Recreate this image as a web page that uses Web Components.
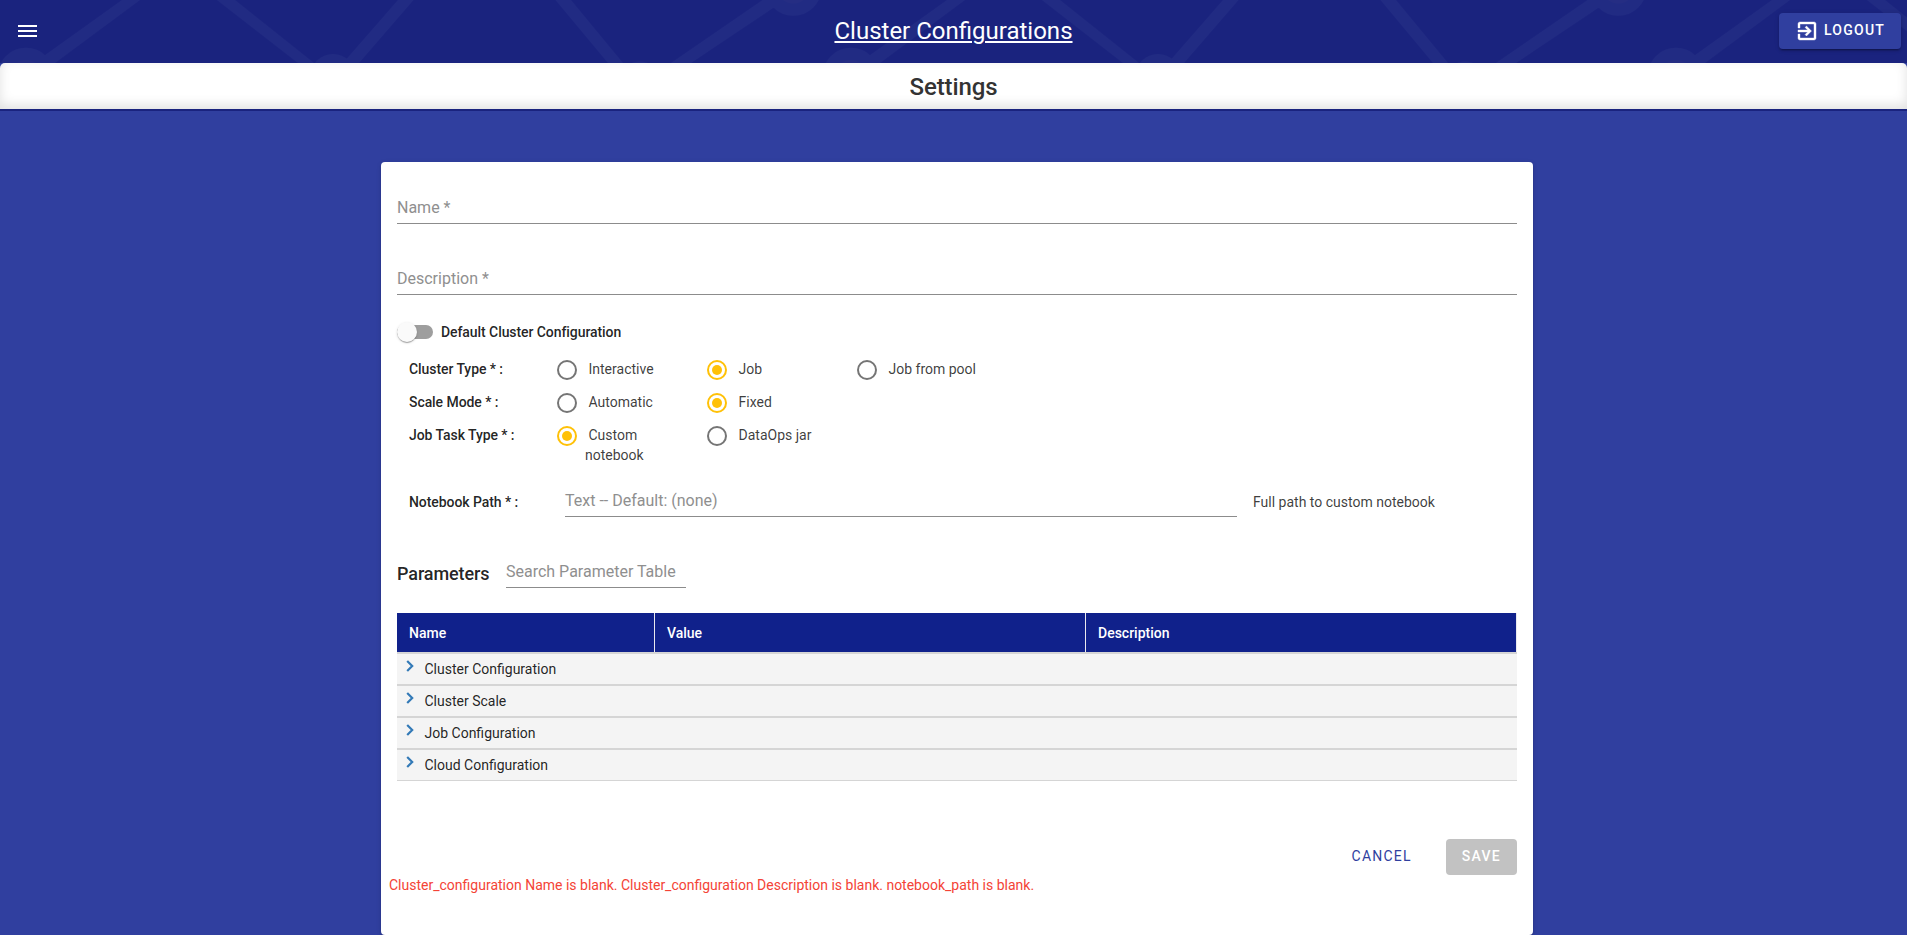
<!DOCTYPE html>
<html lang="en">
<head>
<meta charset="utf-8">
<title>Cluster Configurations</title>
<style>
  html, body { margin: 0; height: 100%; overflow: hidden; }
  body { background: #303f9f; font-family: Roboto, "Liberation Sans", sans-serif; color: rgba(0,0,0,.87); font-size: 14px; }
</style>
</head>
<body>
<cluster-page></cluster-page>
<script>
const define = (name, html) => {
  const tpl = document.createElement('template');
  tpl.innerHTML = html;
  customElements.define(name, class extends HTMLElement {
    constructor() {
      super();
      this.attachShadow({ mode: 'open' }).appendChild(tpl.content.cloneNode(true));
    }
  });
};

define('app-header', `
<style>
  :host { display: grid; grid-template-columns: 1fr auto 1fr; align-items: center; height: 63px; background: #1a237e; color: #fff; position: relative; isolation: isolate; box-sizing: border-box; padding: 0 6px 1px 15px; }
  .pattern { position: absolute; inset: 0; width: 100%; height: 100%; z-index: -1; }
  .menu { width: 25px; height: 24px; }
  h1 { margin: 0 9px 0 0; font-size: 24px; font-weight: 400; line-height: 32px; text-decoration: underline; text-decoration-thickness: 2px; text-underline-offset: 2px; }
  .out { justify-self: end; display: flex; align-items: center; height: 36px; width: 122px; box-sizing: border-box; padding-left: 16px; border-radius: 4px; background: #303f9f; font-size: 14px; font-weight: 500; letter-spacing: 1.25px; box-shadow: 0 3px 1px -2px rgba(0,0,0,.2), 0 2px 2px rgba(0,0,0,.14), 0 1px 5px rgba(0,0,0,.12); }
  .out svg { width: 24px; height: 24px; margin-right: 5px; }
  .out span { padding-bottom: 2px; }
</style>
<svg class="pattern" aria-hidden="true">
  <defs>
    <pattern id="net" width="825" height="63" patternUnits="userSpaceOnUse">
      <g fill="#212b83">
        <circle cx="26" cy="76" r="28.3"/>
        <path d="M122 0h18L55 63H34Z"/>
        <path d="M217 0h18L314 63H298Z"/>
        <circle cx="333" cy="76.5" r="22.5"/>
        <path d="M398 0h15.5L359 63H343Z"/>
        <path d="M555.5 0H571L623 63H608Z"/>
        <circle cx="640" cy="84" r="22.5"/>
        <path d="M762.600 0H785L691 63H671Z"/>
        <circle cx="793.300" cy="-12.500" r="28.3"/>
      </g>
      <g fill="#252d83">
        <circle cx="26" cy="76" r="16"/>
        <circle cx="793.300" cy="-12.500" r="16"/>
      </g>
    </pattern>
  </defs>
  <rect width="100%" height="63" fill="url(#net)"/>
</svg>
<svg class="menu" viewBox="0 0 25 24"><path fill="#fff" d="M3 6h19v2H3zM3 11h19v2H3zM3 16h19v2H3z"/></svg>
<h1>Cluster Configurations</h1>
<div class="out">
  <svg viewBox="0 0 24 24"><path fill="#fff" stroke="#fff" stroke-width=".4" d="M10.090 15.590 11.500 17l5-5-5-5-1.410 1.410L12.670 11H3v2h9.670l-2.580 2.590zM19 3H5c-1.110 0-2 .9-2 2v4h2V5h14v14H5v-4H3v4c0 1.100.89 2 2 2h14c1.100 0 2-.9 2-2V5c0-1.100-.9-2-2-2z"/></svg>
  <span>LOGOUT</span>
</div>`);

define('page-title', `
<style>
  :host { display: block; height: 46px; line-height: 48px; text-align: center; background: #fff; border-radius: 5px 5px 0 0; border-bottom: 2px solid #1a237e; font-size: 24px; font-weight: 500; letter-spacing: -.1px; color: #333; box-shadow: inset 0 -4px 12px rgba(0,0,0,.12); }
</style><slot></slot>`);

define('text-field', `
<style>
  :host { display: block; box-sizing: border-box; height: 32px; line-height: 32px; border-bottom: 1px solid #8c8c8c; font-size: 16px; color: #8f8f8f; }
</style><slot></slot>`);

define('toggle-switch', `
<style>
  :host { display: flex; align-items: center; height: 20px; font-weight: 500; letter-spacing: -.07px; }
  .track { width: 36px; height: 14px; border-radius: 7px; background: #9e9e9e; display: flex; align-items: center; margin-right: 8px; }
  .thumb { width: 20px; height: 20px; border-radius: 50%; background: #fafafa; box-shadow: 0 2px 1px -1px rgba(0,0,0,.2), 0 1px 1px rgba(0,0,0,.14), 0 1px 3px rgba(0,0,0,.12); }
</style><span class="track"><span class="thumb"></span></span><span><slot></slot></span>`);

define('radio-option', `
<style>
  :host { display: grid; grid-template-columns: 20px 1fr; column-gap: 8px; width: 150px; box-sizing: border-box; line-height: 20px; color: rgba(0,0,0,.77); }
  i { width: 20px; height: 20px; border: 2px solid #757575; border-radius: 50%; box-sizing: border-box; display: grid; place-items: center; margin-top: 1px; }
  :host([checked]) i { border-color: #ffc107; }
  :host([checked]) i::after { content: ""; width: 10px; height: 10px; border-radius: 50%; background: #ffc107; }
  span { text-indent: 3.5px; max-width: 97px; }
</style><i></i><span><slot></slot></span>`);

define('option-row', `
<style>
  :host { display: flex; min-height: 33px; padding-left: 12px; }
  b { width: 148px; font-weight: 500; line-height: 20px; letter-spacing: -.07px; }
</style><b><slot name="label"></slot></b><slot></slot>`);

define('param-table', `
<style>
  :host { display: block; }
  .head { display: grid; grid-template-columns: 258px 431px 431px; height: 39px; line-height: 40px; color: #fff; font-weight: 500; }
  .head span { height: 39px; background: #10218b; padding-left: 12px; border-right: 1px solid #e9e9ee; }
  .body { border-top: 1px solid #d5d5d5; }
</style>
<div class="head"><span>Name</span><span>Value</span><span>Description</span></div>
<div class="body"><slot></slot></div>`);

define('param-group', `
<style>
  :host { display: flex; box-sizing: border-box; height: 32px; background: #f4f4f4; border-top: 1px solid #d5d5d5; border-bottom: 1px solid #d5d5d5; padding-left: 8.5px; line-height: 30px; }
  :host(:first-of-type) { border-top-color: #d5d5d5; }
  svg { width: 8px; height: 12px; margin: 6px 11px 0 0; flex: none; }
</style><svg viewBox="0 0 8 12"><path d="M1.200 1 6.200 6 1.200 11" fill="none" stroke="#337ab7" stroke-width="2.2"/></svg><slot></slot>`);

define('action-button', `
<style>
  :host { display: block; box-sizing: border-box; height: 36px; line-height: 35px; padding: 0 16px; border-radius: 4px; letter-spacing: 1.25px; color: #303f9f; }
  :host([disabled]) { background: #c2c2c2; color: #fff; font-weight: 500; }
</style><slot></slot>`);

define('cluster-page', `
<style>
  :host { display: block; }
  main { box-sizing: border-box; width: 1152px; height: 773px; margin: 51px 0 0 381px; background: #fff; border-radius: 4px; padding: 0 16px; box-shadow: 0 2px 2px rgba(0,0,0,.14), 0 1px 5px rgba(0,0,0,.12); display: flow-root; }
  .name { margin-top: 30px; }
  .desc { margin-top: 39px; }
  toggle-switch { margin-top: 27px; }
  .options { margin-top: 17px; }
  .path { display: grid; grid-template-columns: 156px 672px auto; padding-left: 12px; margin-top: 20px; line-height: 34px; }
  .path b { font-weight: 500; letter-spacing: -.07px; }
  .path .hint { padding-left: 16px; color: rgba(0,0,0,.77); }
  .params { display: flex; margin-top: 37px; }
  h2 { margin: 0; width: 109px; font-size: 18px; font-weight: 500; line-height: 35px; letter-spacing: -.1px; }
  .params text-field { width: 180px; }
  param-table { margin-top: 22px; }
  .actions { display: flex; justify-content: flex-end; gap: 18px; margin-top: 58px; }
  .error { margin: 0 0 0 -8px; line-height: 20px; color: #f44336; }
</style>
<app-header></app-header>
<page-title>Settings</page-title>
<main>
  <text-field class="name">Name *</text-field>
  <text-field class="desc">Description *</text-field>
  <toggle-switch>Default Cluster Configuration</toggle-switch>
  <div class="options">
    <option-row><span slot="label">Cluster Type * :</span><radio-option>Interactive</radio-option><radio-option checked>Job</radio-option><radio-option>Job from pool</radio-option></option-row>
    <option-row><span slot="label">Scale Mode * :</span><radio-option>Automatic</radio-option><radio-option checked>Fixed</radio-option></option-row>
    <option-row><span slot="label">Job Task Type * :</span><radio-option checked>Custom notebook</radio-option><radio-option>DataOps jar</radio-option></option-row>
  </div>
  <div class="path"><b>Notebook Path * :</b><text-field>Text -- Default: (none)</text-field><span class="hint">Full path to custom notebook</span></div>
  <div class="params"><h2>Parameters</h2><text-field>Search Parameter Table</text-field></div>
  <param-table>
    <param-group>Cluster Configuration</param-group>
    <param-group>Cluster Scale</param-group>
    <param-group>Job Configuration</param-group>
    <param-group>Cloud Configuration</param-group>
  </param-table>
  <div class="actions"><action-button>CANCEL</action-button><action-button disabled>SAVE</action-button></div>
  <p class="error">Cluster_configuration Name is blank. Cluster_configuration Description is blank. notebook_path is blank.</p>
</main>`);
</script>
</body>
</html>
